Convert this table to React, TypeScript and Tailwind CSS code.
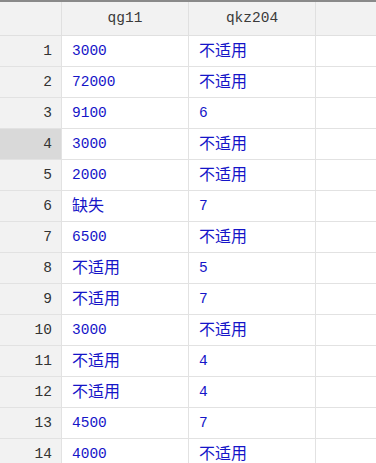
import React from "react";

const rows: [string, string][] = [
  ["3000", "不适用"],
  ["72000", "不适用"],
  ["9100", "6"],
  ["3000", "不适用"],
  ["2000", "不适用"],
  ["缺失", "7"],
  ["6500", "不适用"],
  ["不适用", "5"],
  ["不适用", "7"],
  ["3000", "不适用"],
  ["不适用", "4"],
  ["不适用", "4"],
  ["4500", "7"],
  ["4000", "不适用"],
];

const isCjk = (s: string) => /[\u4e00-\u9fff]/.test(s);

function Cell({ v }: { v: string }) {
  return (
    <div className="h-[31px] border-r border-b border-[#e2e2e2] bg-white pl-[10px] flex items-center text-[14.5px] text-[#1515c8] whitespace-nowrap overflow-hidden">
      {isCjk(v) ? (
        <span className="relative -top-[2px] text-[16px] leading-none [font-family:'Noto_Sans_CJK_SC',sans-serif]">{v}</span>
      ) : (
        <span className="leading-none">{v}</span>
      )}
    </div>
  );
}

export default function App() {
  return (
    <div className="w-[376px] h-[463px] overflow-hidden bg-white border-t-2 border-[#8a8a8a] [font-family:'Liberation_Mono',monospace]">
      <div className="grid grid-cols-[62px_127px_127px_1fr]">
        <div className="h-[34px] bg-[#f2f2f2] border-r border-b border-[#e0e0e0]" />
        <div className="h-[34px] bg-[#f2f2f2] border-r border-b border-[#e0e0e0] text-center leading-[33px] text-[14.5px] text-[#3a3a3a]">qg11</div>
        <div className="h-[34px] bg-[#f2f2f2] border-r border-b border-[#e0e0e0] text-center leading-[33px] text-[14.5px] text-[#3a3a3a]">qkz204</div>
        <div className="h-[34px] bg-[#f2f2f2] border-b border-[#e0e0e0]" />
        {rows.map(([a, b], i) => (
          <React.Fragment key={i}>
            <div
              className={
                i === 3
                  ? "h-[31px] bg-[#d9d9d9] border-r border-b border-[#e2e2e2] text-right leading-[30px] pr-[9px] text-[14.5px] text-[#333]"
                  : "h-[31px] bg-[#f2f2f2] border-r border-b border-[#e2e2e2] text-right leading-[30px] pr-[9px] text-[14.5px] text-[#333]"
              }
            >
              {i + 1}
            </div>
            <Cell v={a} />
            <Cell v={b} />
            <div className="h-[31px] border-b border-[#e2e2e2] bg-white" />
          </React.Fragment>
        ))}
      </div>
    </div>
  );
}
